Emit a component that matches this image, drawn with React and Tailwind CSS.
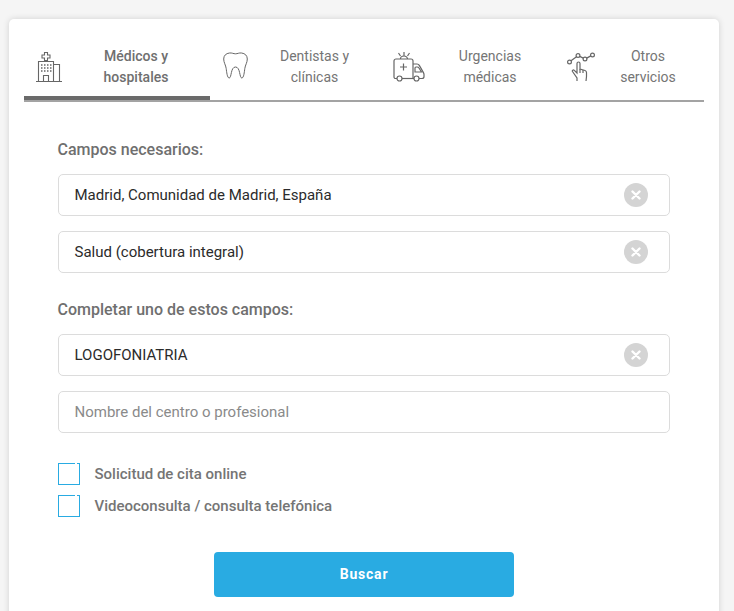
const Hospital = () => (
  <svg width="26" height="30" viewBox="0 0 26 30" fill="none" stroke="#666" strokeWidth="1.100" className="shrink-0">
    <path d="M0 29.500h26M2.500 29.500V9.500h15v20M17.500 12.500h6v17" />
    <path d="M6 3h2.500V.5h3V3H14v3h-2.500v2.500h-3V6H6z" />
    <path d="M7.500 29.500v-6h5v6" />
    <path d="M5 13h1.500M8 13h1.500M11 13h1.500M14 13h1.500M5 16h1.500M8 16h1.500M11 16h1.500M14 16h1.500M5 19h1.500M8 19h1.500M11 19h1.500M14 19h1.500" strokeWidth="1.300" />
  </svg>
);
const Tooth = () => (
  <svg width="25" height="27" viewBox="0 0 25 27" fill="none" stroke="#666" strokeWidth="1" className="shrink-0">
    <path d="M6.500 1c2.500-.3 4 .8 6 .8s3.500-1.100 6-.8c3.500.4 5.800 2.500 5.800 6 0 3.500-2 6-2.500 9.500-.4 3.200-1 9.500-3 9.500-2.500 0-1.300-11-6.300-11s-3.800 11-6.300 11c-2 0-2.600-6.300-3-9.500C2.700 13 .7 10.500.7 7c0-3.500 2.300-5.600 5.800-6z" />
  </svg>
);
const Ambulance = () => (
  <svg width="32" height="30" viewBox="0 0 32 30" fill="none" stroke="#666" strokeWidth="1.200" className="shrink-0">
    <path d="M11 0v3.500M5.500 1l2 3M16.500 1l-2 3M7.500 7a3.500 3 0 0 1 7 0" />
    <path d="M4 26.500H2.500A1.500 1.500 0 0 1 1 25V9a2 2 0 0 1 2-2h15a2 2 0 0 1 2 2v17" />
    <circle cx="6.500" cy="26.500" r="2.500" />
    <circle cx="23.500" cy="26.500" r="2.500" />
    <path d="M9 26.500h12" />
    <path d="M20 12h4c1 0 1.800.5 2.300 1.400l4 7c.4.700.7 1.400.7 2.100v2c0 1.100-.9 2-2 2h-3" />
    <path d="M22 20h6.500l-2.500-4c-.4-.7-1-1-1.800-1H23a1 1 0 0 0-1 1z" />
    <path d="M10.500 11.500v7M7 15h7" />
  </svg>
);
const Touch = () => (
  <svg width="28" height="29" viewBox="0 0 28 29" fill="none" stroke="#666" strokeWidth="1.200" className="shrink-0">
    <circle cx="2.500" cy="10" r="1.900" />
    <circle cx="11" cy="3.500" r="1.900" />
    <circle cx="18" cy="7" r="1.900" />
    <circle cx="25.500" cy="3" r="1.900" />
    <path d="M4 8.800L9.500 4.700M12.700 4.400L16.300 6.100M19.700 6.100L23.800 3.900" />
    <path d="M10 29v-3L5.500 19.500c-.6-1 .8-2.200 1.800-1.200l2.700 2.700V11.500c0-2 3-2 3 0V17l5 1.500c1 .3 1.500 1 1.500 2v4L19 29" />
    <path d="M13 17v4M16 18v3" />
  </svg>
);

const tabs = [
  { icon: <Hospital />, a: "Médicos y", b: "hospitales", w: "w-[186px] pl-[12px]", active: true },
  { icon: <Tooth />, a: "Dentistas y", b: "clínicas", w: "w-[171px] pl-[13px]" },
  { icon: <Ambulance />, a: "Urgencias", b: "médicas", w: "w-[174px] pl-[12px]" },
  { icon: <Touch />, a: "Otros", b: "servicios", w: "w-[149px] pl-[12px] pr-[3px]" },
];

const Field = ({ value, placeholder }) => (
  <div className="h-[42px] w-[612px] rounded-[5px] border border-[#dcdcdc] bg-white flex items-center pl-[15.5px] pr-[21px] text-[15px]">
    <span className={value ? "flex-1 text-[#2b2b2b]" : "flex-1 text-[#8a8a8a]"}>{value || placeholder}</span>
    {value && (
      <span className="w-[24px] h-[24px] rounded-full bg-[#d4d4d4] flex items-center justify-center">
        <svg width="10" height="10" viewBox="0 0 10 10" stroke="#fff" strokeWidth="2.400" strokeLinecap="round">
          <path d="M1.500 1.500l7 7M8.500 1.500l-7 7" />
        </svg>
      </span>
    )}
  </div>
);

const Check = ({ label }) => (
  <div className="flex items-center h-[22px]">
    <span className="relative w-[22px] h-[22px] border border-[#29abe2] shrink-0 bg-white">
      <span className="absolute top-[-1px] right-[2px] w-[2px] h-[1px] bg-white" />
    </span>
    <span className="ml-[14.5px] text-[15px] font-medium text-[#757575]">{label}</span>
  </div>
);

export default function App() {
  return (
    <div className="h-[611px] w-[734px] overflow-hidden bg-[#f5f5f5] pt-[19px] pl-[9px] font-['Roboto',sans-serif]">
      <div className="w-[710px] h-[620px] bg-white rounded-[5px] shadow-[0_0_6px_rgba(0,0,0,0.15)] pt-[26px] px-[15px]">
        <div className="flex border-b-2 border-[#a3a3a3] h-[57px] w-[680px]">
          {tabs.map((t) => (
            <div key={t.a} className={`${t.w} h-[55px] flex pt-[1px] ${t.active ? "border-b-4 border-[#6a6a6a]" : ""}`}>
              <div className="h-[30px] flex items-start mt-[6px]">{t.icon}</div>
              <div className={`flex-1 text-center text-[14px] leading-[21px] ${t.active ? "font-medium text-[#6f6f6f]" : "text-[#757575]"}`}>
                <div>{t.a}</div>
                <div>{t.b}</div>
              </div>
            </div>
          ))}
        </div>
        <div className="pl-[34px] pt-[37px]">
          <div className="text-[16px] leading-[22px] font-medium text-[#6f6f6f] mb-[13px] -ml-[0.5px]">Campos necesarios:</div>
          <div className="flex flex-col gap-[15px]">
            <Field value="Madrid, Comunidad de Madrid, España" />
            <Field value="Salud (cobertura integral)" />
          </div>
          <div className="text-[16px] leading-[22px] font-medium text-[#6f6f6f] mt-[26px] mb-[13px] -ml-[0.5px]">Completar uno de estos campos:</div>
          <div className="flex flex-col gap-[15px]">
            <Field value="LOGOFONIATRIA" />
            <Field placeholder="Nombre del centro o profesional" />
          </div>
          <div className="flex flex-col gap-[10px] mt-[30px]">
            <Check label="Solicitud de cita online" />
            <Check label="Videoconsulta / consulta telefónica" />
          </div>
          <div className="w-[612px] flex justify-center mt-[35px]">
            <button className="w-[300px] h-[45px] rounded-[4px] bg-[#29abe2] text-white text-[14px] tracking-[0.8px] font-bold">Buscar</button>
          </div>
        </div>
      </div>
    </div>
  );
}
